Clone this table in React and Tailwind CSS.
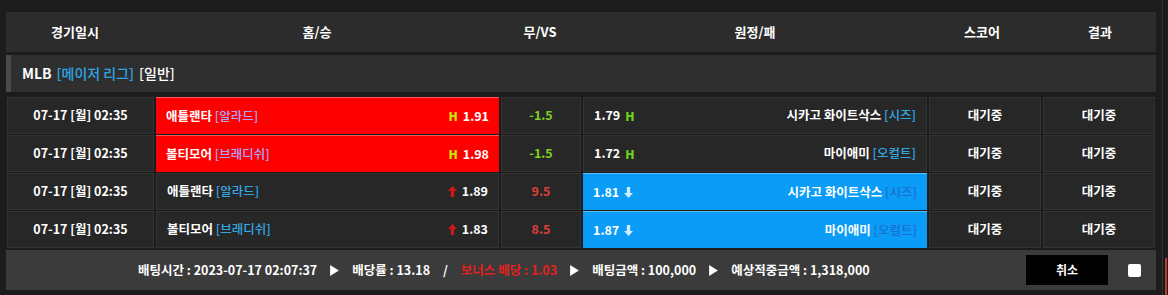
const font = { fontFamily: '"Noto Sans CJK KR", "Noto Sans", sans-serif' }

const rows = [
  {
    home: '애틀랜타',
    homeP: '[알라드]',
    homeOdd: '1.91',
    homeIcon: 'h',
    vs: '-1.5',
    vsColor: 'text-[#7ed321]',
    awayOdd: '1.79',
    awayIcon: 'h',
    away: '시카고 화이트삭스',
    awayP: '[시즈]',
    sel: 'home',
  },
  {
    home: '볼티모어',
    homeP: '[브래디쉬]',
    homeOdd: '1.98',
    homeIcon: 'h',
    vs: '-1.5',
    vsColor: 'text-[#7ed321]',
    awayOdd: '1.72',
    awayIcon: 'h',
    away: '마이애미',
    awayP: '[오컬트]',
    sel: 'home',
  },
  {
    home: '애틀랜타',
    homeP: '[알라드]',
    homeOdd: '1.89',
    homeIcon: 'up',
    vs: '9.5',
    vsColor: 'text-[#e0403a]',
    awayOdd: '1.81',
    awayIcon: 'down',
    away: '시카고 화이트삭스',
    awayP: '[시즈]',
    sel: 'away',
  },
  {
    home: '볼티모어',
    homeP: '[브래디쉬]',
    homeOdd: '1.83',
    homeIcon: 'up',
    vs: '8.5',
    vsColor: 'text-[#e0403a]',
    awayOdd: '1.87',
    awayIcon: 'down',
    away: '마이애미',
    awayP: '[오컬트]',
    sel: 'away',
  },
]

function Icon({ type, onRed }) {
  if (type === 'h') {
    return (
      <span className={`text-[12px] font-black leading-none ${onRed ? 'text-[#c6e600]' : 'text-[#6fd11a]'}`}>H</span>
    )
  }
  if (type === 'up') {
    return (
      <svg viewBox="0 0 10 12" className="h-[11px] w-[9px]">
        <path d="M5 0 L10 5.5 H6.8 V12 H3.2 V5.5 H0 Z" fill="#d01818" />
      </svg>
    )
  }
  return (
    <svg viewBox="0 0 10 12" className="h-[11px] w-[9px]">
      <path d="M5 12 L10 6.5 H6.8 V0 H3.2 V6.5 H0 Z" fill="#cfeeff" />
    </svg>
  )
}

function Row({ r }) {
  const homeSel = r.sel === 'home'
  const awaySel = r.sel === 'away'
  return (
    <div className="flex h-[37px] gap-[2px] text-[12.5px] font-bold text-white">
      <div className="flex w-[147px] items-center justify-center border border-[#333] bg-[#272727]">
        07-17 [월] 02:35
      </div>
      <div
        className={`flex w-[343px] items-center justify-between px-[10px] ${
          homeSel ? 'border-t border-[#ff5a5a] bg-[#ff0000]' : 'border border-[#333] bg-[#272727]'
        }`}
      >
        <span>
          {r.home}{' '}
          <span className={homeSel ? 'font-medium text-[#a9a6ff]' : 'font-medium text-[#33a7e4]'}>{r.homeP}</span>
        </span>
        <span className="flex items-center gap-[5px]">
          <Icon type={r.homeIcon} onRed={homeSel} />
          {r.homeOdd}
        </span>
      </div>
      <div className={`flex w-[80px] items-center justify-center border border-[#333] bg-[#272727] ${r.vsColor}`}>
        {r.vs}
      </div>
      <div
        className={`flex w-[344px] items-center justify-between px-[10px] ${
          awaySel ? 'border-t border-[#5cc0ff] bg-[#0a9cf7]' : 'border border-[#333] bg-[#272727]'
        }`}
      >
        <span className="flex items-center gap-[5px]">
          {r.awayOdd}
          <Icon type={r.awayIcon} />
        </span>
        <span>
          {r.away}{' '}
          <span className={awaySel ? 'font-medium text-[#1a6fd0]' : 'font-medium text-[#33a7e4]'}>{r.awayP}</span>
        </span>
      </div>
      <div className="flex w-[112px] items-center justify-center border border-[#333] bg-[#272727]">대기중</div>
      <div className="flex w-[112px] items-center justify-center border border-[#333] bg-[#272727]">대기중</div>
    </div>
  )
}

function Arrow() {
  return (
    <svg viewBox="0 0 8 10" className="mx-[13px] h-[11px] w-[9px]">
      <path d="M0 0 L8 5 L0 10 Z" fill="#fff" />
    </svg>
  )
}

export default function App() {
  return (
    <div className="flex h-[295px] w-[1168px] bg-[#1c1c1c]" style={font}>
      <div className="ml-[6px] mt-[12px] flex w-[1150px] flex-col">
        <div className="flex h-[40px] items-center bg-[#2c2c2c] text-[13px] font-bold text-white">
          <div className="w-[138px] text-center">경기일시</div>
          <div className="w-[346px] text-center">홈/승</div>
          <div className="w-[100px] text-center">무/VS</div>
          <div className="w-[330px] text-center">원정/패</div>
          <div className="w-[124px] text-center">스코어</div>
          <div className="flex-1 text-center">결과</div>
        </div>
        <div className="mt-[3px] flex h-[37px] items-center border-l-[5px] border-[#4a4a4a] bg-[#2f2f2f] pl-[11px] text-[14px] font-bold text-white">
          MLB <span className="ml-[5px] font-medium text-[#2ea6e6]">[메이저 리그]</span>
          <span className="ml-[5px] font-medium">[일반]</span>
        </div>
        <div className="mt-[5px] flex flex-col gap-[1px] px-[1px]">
          {rows.map((r, i) => (
            <Row key={i} r={r} />
          ))}
        </div>
        <div className="mt-[2px] flex h-[40px] items-center bg-[#3b3b3b] text-[12.5px] font-bold text-white">
          <div className="ml-[132px] flex items-center">
            <span>배팅시간 : 2023-07-17 02:07:37</span>
            <Arrow />
            <span>배당률 : 13.18</span>
            <span className="mx-[13px]">/</span>
            <span className="text-[#e3211c]">보너스 배당 : 1.03</span>
            <Arrow />
            <span>배팅금액 : 100,000</span>
            <Arrow />
            <span>예상적중금액 : 1,318,000</span>
          </div>
          <button className="ml-auto flex h-[30px] w-[82px] items-center justify-center bg-black text-[12px] font-bold text-white">
            취소
          </button>
          <div className="ml-[20px] mr-[15px] h-[13px] w-[13px] rounded-[2px] bg-white" />
        </div>
      </div>
      <div className="ml-[6px] flex h-full flex-col">
        <div className="h-full w-[3px] border-l border-[#2e3440] bg-[#16181c]" />
      </div>
      <div className="mt-[258px] h-[37px] w-[2px] bg-[#c0392b]" />
    </div>
  )
}
